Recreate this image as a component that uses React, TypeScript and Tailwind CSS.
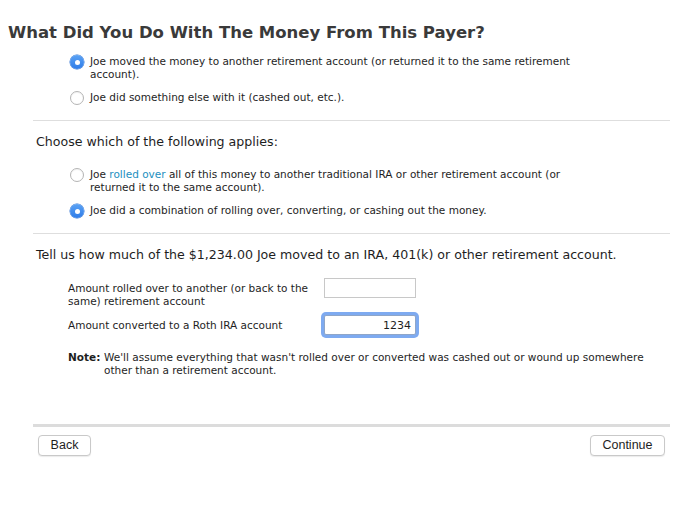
import React, { useState } from 'react';

const font = { fontFamily: '"DejaVu Sans", "Liberation Sans", sans-serif' };
const btnFont = { fontFamily: '"Liberation Sans", Arial, sans-serif' };

function Radio({ checked, onClick }: { checked: boolean; onClick: () => void }) {
  return (
    <button
      type="button"
      onClick={onClick}
      className={
        checked
          ? 'flex h-[14px] w-[14px] shrink-0 items-center justify-center rounded-full bg-gradient-to-b from-[#5aa2f4] to-[#2f7ce8] shadow-[0_0_0_0.5px_#2a6fd0]'
          : 'h-[14px] w-[14px] shrink-0 rounded-full border border-[#b4b4b4] bg-white shadow-[inset_0_1px_1px_rgba(0,0,0,0.05)]'
      }
    >
      {checked && <span className="h-[5px] w-[5px] rounded-full bg-white" />}
    </button>
  );
}

function Option({ checked, onClick, children }: { checked: boolean; onClick: () => void; children: React.ReactNode }) {
  return (
    <div className="flex items-start gap-[6px]">
      <Radio checked={checked} onClick={onClick} />
      <p className="w-[490px] text-[10.5px] leading-[13px] text-[#1e1e1e]">{children}</p>
    </div>
  );
}

export default function App() {
  const [moved, setMoved] = useState('moved');
  const [kind, setKind] = useState('combo');
  const [rolled, setRolled] = useState('');
  const [converted, setConverted] = useState('1234');

  return (
    <div className="flex h-[517px] w-[689px] flex-col bg-white" style={font}>
      <h1 className="pl-[8px] pt-[22px] text-[16.5px] font-bold leading-[22px] text-[#3a3a3a]">
        What Did You Do With The Money From This Payer?
      </h1>

      <div className="mt-[11px] flex flex-col gap-[10px] pl-[70px]">
        <Option checked={moved === 'moved'} onClick={() => setMoved('moved')}>
          Joe moved the money to another retirement account (or returned it to the same retirement account).
        </Option>
        <Option checked={moved === 'else'} onClick={() => setMoved('else')}>
          Joe did something else with it (cashed out, etc.).
        </Option>
      </div>

      <div className="ml-[33px] mr-[19px] mt-[15px] border-t border-[#dedede]" />

      <h2 className="pl-[36px] pt-[13px] text-[12.6px] leading-[16px] text-[#1e1e1e]">Choose which of the following applies:</h2>

      <div className="mt-[18px] flex flex-col gap-[10px] pl-[70px]">
        <Option checked={kind === 'rolled'} onClick={() => setKind('rolled')}>
          Joe <span className="text-[#1d8fc0]">rolled over</span> all of this money to another traditional IRA or other
          retirement account (or returned it to the same account).
        </Option>
        <Option checked={kind === 'combo'} onClick={() => setKind('combo')}>
          Joe did a combination of rolling over, converting, or cashing out the money.
        </Option>
      </div>

      <div className="ml-[33px] mr-[19px] mt-[15px] border-t border-[#dedede]" />

      <h2 className="pl-[36px] pt-[13px] text-[12.6px] leading-[16px] text-[#1e1e1e]">
        Tell us how much of the $1,234.00 Joe moved to an IRA, 401(k) or other retirement account.
      </h2>

      <div className="mt-[19px] flex flex-col gap-[7px] pl-[68px] text-[10.5px] leading-[13px] text-[#1e1e1e]">
        <div className="flex items-start">
          <label className="w-[256px]">Amount rolled over to another (or back to the same) retirement account</label>
          <input
            value={rolled}
            onChange={e => setRolled(e.target.value)}
            className="-mt-[4px] h-[20px] w-[92px] border border-[#c8c8c8] bg-white px-1 text-right text-[11px] outline-none"
          />
        </div>
        <div className="flex items-center">
          <label className="w-[256px]">Amount converted to a Roth IRA account</label>
          <input
            value={converted}
            onChange={e => setConverted(e.target.value)}
            className="h-[20px] w-[92px] rounded-[2px] border border-[#8fa6c8] bg-white px-1 text-right text-[11px] outline-none ring-[3px] ring-[#7eaaf0]"
          />
        </div>
        <div className="mt-[9px] flex">
          <span className="w-[36px] font-bold">Note:</span>
          <p className="w-[552px]">
            We'll assume everything that wasn't rolled over or converted was cashed out or wound up somewhere other than a
            retirement account.
          </p>
        </div>
      </div>

      <div className="ml-[33px] mr-[19px] mt-[47px] h-[3px] bg-[#dcdcdc]" />

      <div className="ml-[38px] mr-[24px] mt-[8px] flex justify-between text-[12.5px] text-[#1e1e1e]" style={btnFont}>
        <button className="h-[21px] w-[53px] rounded-[4px] border border-[#c9c9c9] bg-white shadow-[0_1px_1px_rgba(0,0,0,0.08)]">
          Back
        </button>
        <button className="h-[21px] w-[75px] rounded-[4px] border border-[#c9c9c9] bg-white shadow-[0_1px_1px_rgba(0,0,0,0.08)]">
          Continue
        </button>
      </div>
    </div>
  );
}
